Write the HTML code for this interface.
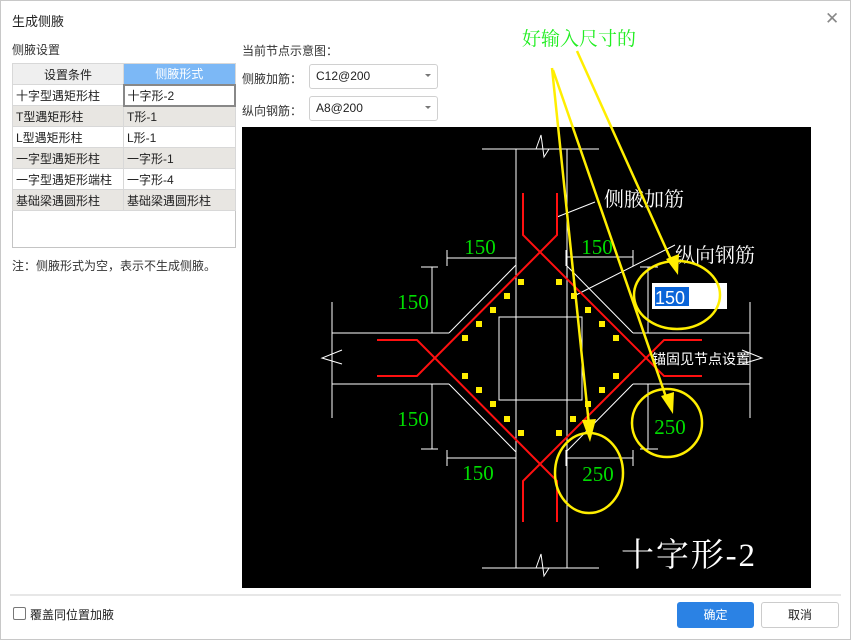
<!DOCTYPE html>
<html><head><meta charset="utf-8"><style>
*{margin:0;padding:0;box-sizing:border-box}
body{width:851px;height:640px;background:#fff;font-family:"Liberation Sans","Noto Sans CJK SC",sans-serif;font-size:12px;color:#333;position:relative;overflow:hidden}
.frame{position:absolute;left:0;top:0;width:851px;height:640px;border:1px solid #c8c8c8}
.abs{position:absolute;white-space:nowrap}
table{position:absolute;left:12px;top:63px;width:224px;border-collapse:collapse;font-size:12px}
td{height:21px;border:1px solid #d8d8d8;padding-left:3px;color:#222}
td.c{text-align:center;padding:0}
tr.g td{background:#e8e6e2}
.sel{width:85px;height:21px;border:1px solid #d0d0d0;border-radius:3px;position:absolute;padding-left:6px;line-height:19px;font-size:12px;color:#222}
.sel:after{content:"";position:absolute;right:6px;top:9px;border-left:3px solid transparent;border-right:3px solid transparent;border-top:3px solid #777}
</style></head><body>
<div class="frame"></div>
<div class="abs" style="left:12px;top:11px;font-size:13px;color:#222">生成侧腋</div>
<div class="abs" style="left:825px;top:9px;font-size:17px;color:#888">✕</div>
<div class="abs" style="left:12px;top:41px;color:#333">侧腋设置</div>
<div style="position:absolute;left:12px;top:63px;width:224px;height:185px;border:1px solid #c4c4c4"></div>
<table>
<tr><td class="c" style="background:#efefef;width:111px">设置条件</td><td class="c" style="background:#7cb8f6;color:#fff">侧腋形式</td></tr>
<tr><td>十字型遇矩形柱</td><td style="border:2px solid #888">十字形-2</td></tr>
<tr class="g"><td>T型遇矩形柱</td><td>T形-1</td></tr>
<tr><td>L型遇矩形柱</td><td>L形-1</td></tr>
<tr class="g"><td>一字型遇矩形柱</td><td>一字形-1</td></tr>
<tr><td>一字型遇矩形端柱</td><td>一字形-4</td></tr>
<tr class="g"><td>基础梁遇圆形柱</td><td>基础梁遇圆形柱</td></tr>
</table>
<div class="abs" style="left:12px;top:257px;color:#333">注：侧腋形式为空，表示不生成侧腋。</div>
<div class="abs" style="left:242px;top:42px">当前节点示意图：</div>
<div class="abs" style="left:242px;top:70px">侧腋加筋：</div>
<div class="sel" style="left:309px;top:64px;width:129px;height:25px;line-height:23px">C12@200</div>
<div class="abs" style="left:242px;top:102px">纵向钢筋：</div>
<div class="sel" style="left:309px;top:96px;width:129px;height:25px;line-height:23px">A8@200</div>
<div class="abs" style="left:522px;top:24px;font-size:19px;color:#22ee22;font-family:'Liberation Serif','Noto Serif CJK SC',serif">好输入尺寸的</div>
<svg style="position:absolute;left:0;top:0" width="851" height="640">
<rect x="242" y="127" width="569" height="461" fill="#000"/>
<g stroke="#fff" stroke-width="1" fill="none">
<path d="M516,149V568M567,149V568M482,149H599M482,568H599"/>
<path d="M536,149l5,-14l3,22l5,-8M536,568l5,-14l3,22l5,-8"/>
<path d="M332,302V418M750,302V418M332,333H449M332,384H449M633,333H750M633,384H750"/>
<path d="M342,350l-20,8l20,6M742,350l20,8l-20,6"/>
<path d="M449,333L516,265M566,265L633,333M449,384L516,452M633,384L566,452"/>
<path d="M447,258H516M566,257H633M447,458H516M566,458H633"/>
<path d="M447,250V266M516,250V266M566,250V266M633,250V266M447,450V466M516,450V466M566,450V466M633,450V466"/>
<path d="M432,267V333M421,267H438M432,384V449M421,449H438M648,267V333M648,384V449M640,267H658M640,449H658"/>
<path d="M557,217L595,202M574,296L675,245"/>
</g>
<g stroke="#ff1010" stroke-width="2" fill="none">
<path d="M523,193V235L664,376H702M557,193V235L417,376H377M523,522V481L664,340H702M557,522V481L417,340H377"/>
</g>
<rect x="499" y="317" width="83" height="83" fill="none" stroke="#fff"/>
<g fill="#ffee00">
<rect x="518" y="279" width="6" height="6"/><rect x="556" y="279" width="6" height="6"/>
<rect x="504" y="293" width="6" height="6"/><rect x="571" y="293" width="6" height="6"/>
<rect x="490" y="307" width="6" height="6"/><rect x="585" y="307" width="6" height="6"/>
<rect x="476" y="321" width="6" height="6"/><rect x="599" y="321" width="6" height="6"/>
<rect x="462" y="335" width="6" height="6"/><rect x="613" y="335" width="6" height="6"/>
<rect x="462" y="373" width="6" height="6"/><rect x="613" y="373" width="6" height="6"/>
<rect x="476" y="387" width="6" height="6"/><rect x="599" y="387" width="6" height="6"/>
<rect x="490" y="401" width="6" height="6"/><rect x="585" y="401" width="6" height="6"/>
<rect x="504" y="416" width="6" height="6"/><rect x="570" y="416" width="6" height="6"/>
<rect x="518" y="430" width="6" height="6"/><rect x="556" y="430" width="6" height="6"/>
</g>
<g fill="#00dd00" font-family="Liberation Serif,serif" font-size="21" text-anchor="middle">
<text x="480" y="254">150</text><text x="597" y="254">150</text>
<text x="413" y="309">150</text><text x="413" y="426">150</text>
<text x="478" y="480">150</text><text x="598" y="481">250</text><text x="670" y="434">250</text>
</g>
<g fill="#fff" font-family="Liberation Serif,'Noto Serif CJK SC',serif">
<text x="604" y="206" font-size="20">侧腋加筋</text>
<text x="675" y="262" font-size="20">纵向钢筋</text>
<text x="652" y="364" font-size="14" font-family="Liberation Sans,'Noto Sans CJK SC',sans-serif">锚固见节点设置</text>
<text x="621" y="566" font-size="33" textLength="134" lengthAdjust="spacing">十字形-2</text>
</g>
<rect x="652" y="283" width="75" height="26" fill="#fff"/>
<rect x="655" y="287" width="34" height="19" fill="#0a64d8"/>
<text x="655" y="304" fill="#fff" font-family="Liberation Sans,sans-serif" font-size="18">150</text>
<g stroke="#ffee00" stroke-width="2.5" fill="none">
<ellipse cx="677" cy="295" rx="43" ry="34"/>
<ellipse cx="667" cy="423" rx="35" ry="34"/>
<ellipse cx="589" cy="473" rx="34" ry="40"/>
<path d="M552,68L589,425M553,70L667,400M577,51L672,262"/>
</g>
<g fill="#ffee00">
<path d="M590,442L582,420L596,419Z"/>
<path d="M673,414L661,396L674,392Z"/>
<path d="M678,275L666,259L679,254Z"/>
</g>
<line x1="10" y1="595" x2="841" y2="595" stroke="#cfcfcf"/>
</svg>
<div style="position:absolute;left:13px;top:607px;width:13px;height:13px;border:1px solid #777;border-radius:2px;background:#fff"></div>
<div class="abs" style="left:30px;top:606px;color:#222">覆盖同位置加腋</div>
<div class="abs" style="left:677px;top:602px;width:77px;height:26px;background:#2b82e4;border-radius:3px;color:#fff;text-align:center;line-height:26px">确定</div>
<div class="abs" style="left:761px;top:602px;width:78px;height:26px;border:1px solid #ccc;border-radius:3px;color:#222;text-align:center;line-height:24px">取消</div>
</body></html>
